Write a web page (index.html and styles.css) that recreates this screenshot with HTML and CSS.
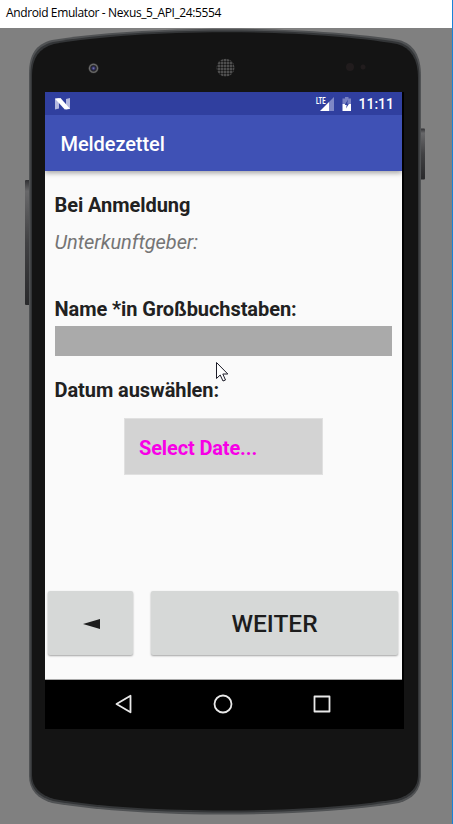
FILE: index.html
```html
<!DOCTYPE html>
<html lang="de">
<head>
<meta charset="utf-8">
<title>Android Emulator - Nexus_5_API_24:5554</title>
<link rel="stylesheet" href="styles.css">
</head>
<body>
<div class="window">
  <header class="titlebar"><span>Android Emulator - Nexus_5_API_24:5554</span></header>
  <main class="stage">
    <svg class="device" width="452" height="796" viewBox="0 28 452 796" aria-hidden="true">
      <defs>
        <linearGradient id="key" x1="0" y1="0" x2="0" y2="1">
          <stop offset="0" stop-color="#303033"/><stop offset=".09" stop-color="#68686a"/><stop offset=".5" stop-color="#414143"/><stop offset="1" stop-color="#29292b"/>
        </linearGradient>
        <pattern id="mesh" width="3" height="3" patternUnits="userSpaceOnUse">
          <rect width="3" height="3" fill="#606060"/><circle cx="1.5" cy="1.5" r="1.2" fill="#161616"/>
        </pattern>
        <radialGradient id="lens"><stop offset="0" stop-color="#7c7cb4"/><stop offset=".3" stop-color="#2b2b60"/><stop offset=".5" stop-color="#222"/><stop offset=".75" stop-color="#707070"/><stop offset="1" stop-color="#222"/></radialGradient>
      </defs>
      <rect x="25" y="180" width="5" height="125" rx="1" fill="url(#key)"/>
      <rect x="420" y="128.500" width="5" height="51" rx="1" fill="url(#key)"/>
      <path d="M29 74C29 54 36 44 52 40C96 33 160 28.800 225 28.800C290 28.800 354 33 399 40C414 44 421 56 421 76V776C421 790 413 799 399 803C350 811 285 814.600 225 814.600C165 814.600 100 811 52 803C38 799 29 790 29 776Z" fill="#505254"/>
      <path d="M30.500 75C30.500 56 37 46 53 42C97 34.500 160 30.500 225 30.500C290 30.500 353 34.500 398 42C412 46 419.500 57 419.500 77V776C419.500 789 412 797 398 801C350 809 285 812.500 225 812.500C165 812.500 100 809 53 801C39 797 30.500 789 30.500 776Z" fill="#333537"/>
      <path d="M32 76C32 58 39 48 54 44C98 36.500 160 32.300 225 32.300C290 32.300 352 36.500 397 44C411 48 418 59 418 78V775C418 787 411 795 397 799C350 807 285 810.500 225 810.500C165 810.500 100 807 54 799C40 795 32 787 32 775Z" fill="#141414"/>
      <circle cx="93.500" cy="68.300" r="5.300" fill="url(#lens)"/>
      <circle cx="225.500" cy="67.700" r="9" fill="url(#mesh)"/>
      <circle cx="350" cy="67" r="4" fill="#211c1d"/>
      <circle cx="363" cy="67" r="2.500" fill="#211c1d"/>
    </svg>
    <section class="screen">
      <div class="statusbar">
        <svg class="n-icon" width="15" height="12" viewBox="0 0 15 12"><path d="M0 .5L4 0V10.500L0 11.500ZM11 1L15 0V11L11 11.500Z" fill="#b4b9df"/><path d="M0 .8L5.500 0L15 10.700L9.800 11.500Z" fill="#fff"/></svg>
        <div class="status-icons">
          <svg class="signal" width="19" height="16" viewBox="0 0 19 16"><path d="M18 1V15H13V6Z" fill="#7e87c6"/><path d="M4 15L13 6V15Z" fill="#fff"/><text class="lte" transform="translate(0 7.500) scale(.66 1)">LTE</text></svg>
          <svg width="10" height="16" viewBox="0 0 10 16"><path d="M3 1H6.500V2.500H9V8H.5V2.500H3Z" fill="#7881c3"/><path d="M.5 8H9V15H.5Z" fill="#fff"/><path d="M6 3.500L2.700 9H4.700L4 12.500L7 7.800H5.200Z" fill="#303f9f"/></svg>
          <span class="clock">11:11</span>
        </div>
      </div>
      <div class="appbar"><h1>Meldezettel</h1></div>
      <div class="content">
        <h2>Bei Anmeldung</h2>
        <p class="hint">Unterkunftgeber:</p>
        <label class="name-label" for="name">Name *in Großbuchstaben:</label>
        <input id="name" class="name-input" type="text">
        <span class="date-label">Datum auswählen:</span>
        <button class="date" type="button">Select Date...</button>
        <div class="actions">
          <button class="back" type="button" aria-label="Zurück"><svg width="17" height="10" viewBox="0 0 17 10"><path d="M0 5L17 0V10Z" fill="#1d1d1d"/></svg></button>
          <button class="next" type="button">WEITER</button>
        </div>
      </div>
      <nav class="navbar">
        <svg width="20" height="20" viewBox="0 0 20 20"><path d="M2.500 10L16.500 1.700V18.300Z"/></svg>
        <svg width="20" height="20" viewBox="0 0 20 20"><circle cx="10" cy="10" r="8.500"/></svg>
        <svg width="20" height="20" viewBox="0 0 20 20"><rect x="2.500" y="2.500" width="15" height="15"/></svg>
      </nav>
    </section>
    <svg class="cursor" width="13" height="20" viewBox="0 0 13 20"><path d="M.5.500V16.500L4.200 13L7 19L9.500 18L6.800 12H11.800Z" fill="#fff" stroke="#1c1c28"/></svg>
  </main>
</div>
</body>
</html>
```
FILE: styles.css
```css
* { box-sizing: border-box; }
body { margin: 0; background: #808080; font-family: Roboto, sans-serif; }
svg { display: block; }
.window { height: 824px; border-right: 1px solid #1883d7; overflow: hidden; }
.titlebar { height: 28px; padding-left: 6px; background: #fff; color: #000; font: 12px/26px "Open Sans", sans-serif; white-space: nowrap; letter-spacing: -0.38px; }
.stage { position: relative; height: 796px; padding: 64px 0 0 45px; background: #808080; }
.device { position: absolute; left: 0; top: 0; }
.screen { position: relative; width: 358.5px; height: 637px; display: flex; flex-direction: column; background: #000; }
.statusbar { width: 357px; height: 23px; display: flex; align-items: center; justify-content: space-between; padding: 0 8px 0 10px; background: #303f9f; }
.status-icons { display: flex; align-items: center; }
.status-icons svg + svg { margin-left: 7px; }
.signal { overflow: visible; }
.lte { font: 700 9px Roboto, sans-serif; fill: #fff; }
.clock { width: 35px; margin-left: 7px; padding-top: 2px; color: #fff; font-size: 14px; line-height: 21px; font-weight: 500; text-indent: -0.5px; }
.appbar { position: relative; z-index: 1; width: 357px; height: 56px; padding-left: 15.5px; background: #3f51b5; box-shadow: 0 2px 5px rgba(0, 0, 0, .35); clip-path: inset(0 0 -10px 0); }
h1 { margin: 0; padding-top: 1px; color: #fff; font-size: 20px; line-height: 57px; font-weight: 500; letter-spacing: -0.08px; }
.content { width: 357px; height: 509px; display: flex; flex-direction: column; padding: 22px 3px 0; background: #fafafa; border-bottom: 1px solid #aaa; color: #212121; }
h2, .name-label, .date-label { margin: 0 0 0 6.5px; font-size: 20px; line-height: 24px; font-weight: 700; letter-spacing: -0.07px; }
.hint { margin: 13px 0 0 6.5px; color: #757575; font-size: 20px; line-height: 24px; font-style: italic; letter-spacing: -0.06px; }
.name-label { margin-top: 43px; }
.name-input { width: 337px; height: 30px; margin: 5px 0 0 6.5px; border: 0; padding: 0; background: #aaa; }
.date-label { margin-top: 22px; }
.date { width: 199px; height: 57px; margin: 16px 0 0 75.5px; padding: 2px 0 0 14.5px; border: 1px solid #e0e0e0; background: #d3d3d3; color: #f700e6; font: 700 20px Roboto, sans-serif; letter-spacing: -0.14px; text-align: left; }
.actions { display: flex; gap: 18px; margin: 116px 0 0; }
.actions button { height: 64px; padding: 0; border: 0; border-radius: 2px; background: #d6d8d7; box-shadow: 0 1px 2px rgba(0, 0, 0, .35); color: #1d1d1d; font: 500 24.500px Roboto, sans-serif; }
.actions .back { width: 85px; padding: 2px 0 0 1px; display: grid; place-items: center; }
.actions .next { width: 247px; padding-top: 1px; }
.navbar { height: 49px; padding: 0 2px 2px 0; display: flex; justify-content: center; align-items: center; gap: 79px; }
.navbar svg { fill: none; stroke: #e8e8e8; stroke-width: 1.8; stroke-linejoin: round; }
.cursor { position: absolute; left: 216px; top: 334px; }
```
